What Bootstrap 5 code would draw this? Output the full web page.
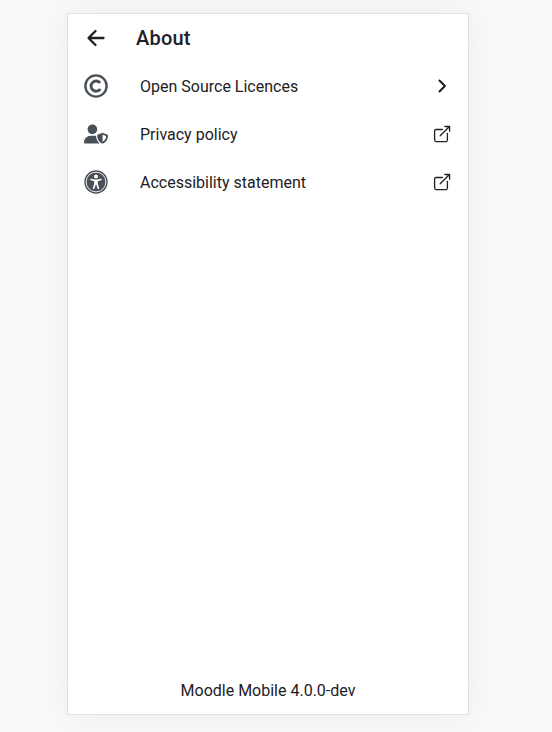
<!DOCTYPE html>
<html lang="en">
<head>
<meta charset="utf-8">
<meta name="viewport" content="width=device-width, initial-scale=1">
<title>About</title>
<link href="https://cdn.jsdelivr.net/npm/bootstrap@5.3.0/dist/css/bootstrap.min.css" rel="stylesheet">
<style>
body{background:#f8faf9;font-family:Roboto,sans-serif;color:#1d2125;font-size:16px;height:732px;padding-top:13px;padding-left:67px;overflow:hidden}
.phone{width:402px;height:702px;border:1px solid #dee2e1;background:#fff;box-shadow:0 0 32px rgba(0,0,0,.06)}
.topbar{height:48px}
.page-title{font-size:20px;font-weight:500;line-height:24px;margin-left:28px;letter-spacing:.2px}
.menu-row{height:48px;padding:0 14px 0 16px}
.menu-row .label{margin-left:32px}
.menu-row .label,.version{padding-top:2px}
.ico{width:24px;height:24px;color:#495057;flex:none}
svg{display:block}
</style>
</head>
<body>
<main class="phone d-flex flex-column">
  <header class="topbar d-flex align-items-center px-3">
    <svg width="24" height="24" viewBox="0 0 24 24" fill="none" stroke="#1d2125" stroke-width="2.3" stroke-linecap="round" stroke-linejoin="round"><path d="M11.500 5 4.500 12l7 7M4.800 12H19.500"/></svg>
    <h1 class="page-title mb-0">About</h1>
  </header>
  <nav class="flex-grow-1">
    <a class="menu-row d-flex align-items-center text-reset text-decoration-none" href="#">
      <svg class="ico" viewBox="0 0 24 24" fill="none" stroke="currentColor"><circle cx="12" cy="12" r="10.600" stroke-width="2.400"/><path d="M16.300 15A5.100 5.100 0 1 1 16.100 8.900" stroke-width="2.900"/></svg>
      <span class="label flex-grow-1">Open Source Licences</span>
      <svg width="24" height="24" viewBox="0 0 24 24" fill="none" stroke="#1d2125" stroke-width="2.100" stroke-linecap="round" stroke-linejoin="round"><path d="m9.500 6.600 5.400 5.400-5.400 5.400"/></svg>
    </a>
    <a class="menu-row d-flex align-items-center text-reset text-decoration-none" href="#">
      <svg class="ico" viewBox="0 0 640 512" fill="currentColor"><path d="M622.300 271.100l-115.200-45c-4.100-1.600-12.600-3.700-22.200 0l-115.200 45c-10.700 4.200-17.700 14-17.700 24.900 0 111.600 68.700 188.800 132.900 213.900 9.600 3.700 18 1.600 22.200 0C558.400 489.900 640 420.500 640 296c0-10.900-7-20.700-17.700-24.900zM496 462.400V273.300l95.500 37.300c-5.600 87.100-60.900 135.400-95.500 151.800zM224 256c70.700 0 128-57.300 128-128S294.700 0 224 0 96 57.300 96 128s57.300 128 128 128zm96 48H179C80 304 0 383 0 482c0 17 13 30 30 30h371c6.800 0 13.300-1.500 19.200-4-54-42.900-99.200-116.700-99.200-204z"/></svg>
      <span class="label flex-grow-1">Privacy policy</span>
      <svg width="24" height="24" viewBox="0 0 24 24" fill="none" stroke="#1d2125" stroke-width="1.300" stroke-linecap="round" stroke-linejoin="round"><path d="M12.500 7.500H6.100A1.500 1.500 0 0 0 4.600 9v9.100a1.500 1.500 0 0 0 1.500 1.500h9.800a1.500 1.500 0 0 0 1.500-1.500v-6.700M10.200 13.800 19.500 4.500M14.900 4.500h4.700v4.800"/></svg>
    </a>
    <a class="menu-row d-flex align-items-center text-reset text-decoration-none" href="#">
      <svg class="ico" viewBox="0 0 24 24"><circle cx="12" cy="12" r="11.700" fill="currentColor"/><circle cx="12" cy="12" r="9.900" fill="none" stroke="#fff" stroke-width=".9"/><circle cx="12" cy="6.400" r="2" fill="#fff"/><path d="M7.100 9.500 10.500 10.300h3l3.400-.8M12 11v3M11 10.800v3L9.700 18.200M13 10.800v3l1.300 4.400" fill="none" stroke="#fff" stroke-width="1.700" stroke-linecap="round" stroke-linejoin="round"/></svg>
      <span class="label flex-grow-1">Accessibility statement</span>
      <svg width="24" height="24" viewBox="0 0 24 24" fill="none" stroke="#1d2125" stroke-width="1.300" stroke-linecap="round" stroke-linejoin="round"><path d="M12.500 7.500H6.100A1.500 1.500 0 0 0 4.600 9v9.100a1.500 1.500 0 0 0 1.500 1.500h9.800a1.500 1.500 0 0 0 1.500-1.500v-6.700M10.200 13.800 19.500 4.500M14.900 4.500h4.700v4.800"/></svg>
    </a>
  </nav>
  <footer class="topbar version d-flex align-items-center justify-content-center">Moodle Mobile 4.0.0-dev</footer>
</main>
<script src="https://cdn.jsdelivr.net/npm/bootstrap@5.3.0/dist/js/bootstrap.bundle.min.js"></script>
</body>
</html>
